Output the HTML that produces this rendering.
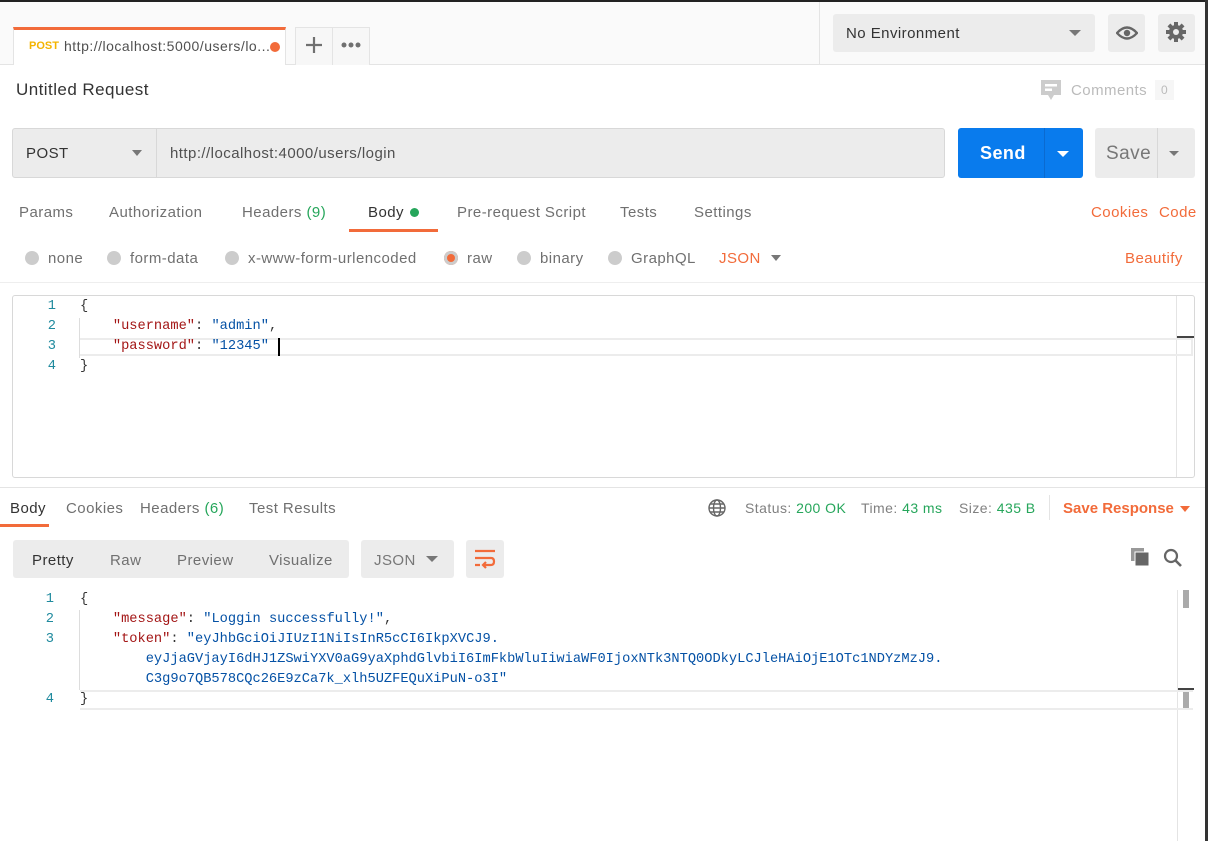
<!DOCTYPE html>
<html><head><meta charset="utf-8"><style>
*{margin:0;padding:0;box-sizing:border-box}
body{width:1208px;height:841px;overflow:hidden;background:#fff;font-family:"Liberation Sans",sans-serif;font-size:15px;letter-spacing:0.45px;color:#505050;position:relative}
.a{position:absolute;white-space:nowrap}
.t{margin-top:1px}
.mono{font-family:"Liberation Mono",monospace;font-size:13.7px;line-height:20px;letter-spacing:0}
.k{color:#a31515}.s{color:#0451a5}.g{color:#1f8a9e}
.rad{display:inline-block;width:14px;height:14px;border-radius:50%;background:#ccc;vertical-align:-2px;margin-right:9px}
.gr{color:#26a65b}
.or{color:#f26b3a}
</style></head><body>
<div class="a" style="left:0;top:0;width:1208px;height:65px;background:#fafafa;border-bottom:1px solid #e4e4e4"></div>
<div class="a" style="left:0;top:0;width:1208px;height:2px;background:#222"></div>
<div class="a" style="left:1205px;top:0;width:3px;height:841px;background:#333"></div>
<div class="a" style="left:13px;top:27px;width:273px;height:38px;background:#fff;border-top:3px solid #f26b3a;border-left:1px solid #e4e4e4;border-right:1px solid #e4e4e4"></div>
<div class="a" style="left:29px;top:40px;font-size:11px;font-weight:bold;color:#f4b400;letter-spacing:0">POST</div>
<div class="a" style="left:64px;top:38px;font-size:14px;color:#505050;letter-spacing:0.5px">http://localhost:5000/users/lo...</div>
<div class="a" style="left:270px;top:42px;width:10px;height:10px;border-radius:50%;background:#f26b3a"></div>
<div class="a" style="left:295px;top:27px;width:75px;height:38px;border:1px solid #e4e4e4;border-bottom:none;background:#f7f7f7"></div>
<div class="a" style="left:332px;top:27px;width:1px;height:38px;background:#e4e4e4"></div>
<svg class="a" style="left:305px;top:36px" width="18" height="18" viewBox="0 0 18 18"><path d="M9 1V17M1 9H17" stroke="#707070" stroke-width="2.2"/></svg>
<svg class="a" style="left:341px;top:42px" width="20" height="6" viewBox="0 0 20 6"><g fill="#707070"><circle cx="3" cy="3" r="2.5"/><circle cx="10" cy="3" r="2.5"/><circle cx="17" cy="3" r="2.5"/></g></svg>
<div class="a" style="left:819px;top:2px;width:1px;height:62px;background:#e4e4e4"></div>
<div class="a" style="left:833px;top:14px;width:262px;height:38px;background:#ececec;border-radius:3px"></div>
<div class="a" style="left:846px;top:25px;font-size:15px;color:#333">No Environment</div>
<div class="a" style="left:1069px;top:30px;border-left:6px solid transparent;border-right:6px solid transparent;border-top:6px solid #777"></div>
<div class="a" style="left:1108px;top:14px;width:37px;height:38px;background:#ececec;border-radius:3px"></div>
<svg class="a" style="left:1116px;top:25px" width="22" height="16" viewBox="0 0 22 16"><path d="M1 8Q11-3 21 8Q11 19 1 8Z" fill="none" stroke="#666" stroke-width="2.4"/><circle cx="11" cy="8" r="3.2" fill="#666"/></svg>
<div class="a" style="left:1158px;top:14px;width:37px;height:38px;background:#ececec;border-radius:3px"></div>
<svg class="a" style="left:1165px;top:21px" width="22" height="22" viewBox="0 0 22 22"><g fill="#666"><circle cx="11" cy="11" r="7"/><rect x="9" y="1" width="4" height="20"/><rect x="1" y="9" width="20" height="4"/><rect x="9" y="1" width="4" height="20" transform="rotate(45 11 11)"/><rect x="9" y="1" width="4" height="20" transform="rotate(-45 11 11)"/></g><circle cx="11" cy="11" r="3" fill="#ececec"/></svg>
<div class="a" style="left:16px;top:80px;font-size:17px;color:#333">Untitled Request</div>
<svg class="a" style="left:1041px;top:80px" width="20" height="20" viewBox="0 0 20 20"><path d="M0 0H20V15H13L10 20L7 15H0Z" fill="#ccc"/><rect x="4" y="4" width="12" height="2.5" fill="#fff"/><rect x="4" y="8.5" width="7" height="2.5" fill="#fff"/></svg>
<div class="a" style="left:1071px;top:82px;font-size:15px;color:#bbb">Comments</div>
<div class="a" style="left:1155px;top:80px;width:19px;height:20px;background:#f6f6f6;color:#bbb;font-size:12px;text-align:center;line-height:20px">0</div>
<div class="a" style="left:12px;top:128px;width:933px;height:50px;background:#ececec;border:1px solid #d8d8d8;border-radius:3px"></div>
<div class="a" style="left:156px;top:129px;width:1px;height:48px;background:#d8d8d8"></div>
<div class="a" style="left:26px;top:145px;font-size:15px;color:#333">POST</div>
<div class="a" style="left:132px;top:150px;border-left:5px solid transparent;border-right:5px solid transparent;border-top:6px solid #777"></div>
<div class="a" style="left:170px;top:145px;font-size:15px;color:#505050">http://localhost:4000/users/login</div>
<div class="a" style="left:958px;top:128px;width:125px;height:50px;background:#097bed;border-radius:3px"></div>
<div class="a" style="left:1044px;top:128px;width:1px;height:50px;background:#0a6ad0"></div>
<div class="a" style="left:980px;top:143px;font-size:18px;font-weight:bold;color:#fff">Send</div>
<div class="a" style="left:1057px;top:151px;border-left:6px solid transparent;border-right:6px solid transparent;border-top:6px solid #fff"></div>
<div class="a" style="left:1095px;top:128px;width:100px;height:50px;background:#ececec;border-radius:3px"></div>
<div class="a" style="left:1157px;top:128px;width:1px;height:50px;background:#d8d8d8"></div>
<div class="a" style="left:1106px;top:143px;font-size:19px;color:#777">Save</div>
<div class="a" style="left:1169px;top:151px;border-left:5px solid transparent;border-right:5px solid transparent;border-top:5px solid #777"></div>
<div class="a" style="left:19px;top:204px;color:#707070">Params</div>
<div class="a" style="left:109px;top:204px;color:#707070">Authorization</div>
<div class="a" style="left:242px;top:204px;color:#707070">Headers <span class="gr">(9)</span></div>
<div class="a" style="left:368px;top:204px;color:#333">Body</div>
<div class="a" style="left:410px;top:208px;width:9px;height:9px;border-radius:50%;background:#26a65b"></div>
<div class="a" style="left:349px;top:229px;width:89px;height:3px;background:#f26b3a"></div>
<div class="a" style="left:457px;top:204px;color:#707070">Pre-request Script</div>
<div class="a" style="left:620px;top:204px;color:#707070">Tests</div>
<div class="a" style="left:694px;top:204px;color:#707070">Settings</div>
<div class="a or" style="left:1091px;top:204px">Cookies</div>
<div class="a or" style="left:1159px;top:204px">Code</div>
<div class="a" style="left:25px;top:250px;color:#707070"><span class="rad"></span>none</div>
<div class="a" style="left:107px;top:250px;color:#707070"><span class="rad"></span>form-data</div>
<div class="a" style="left:225px;top:250px;color:#707070"><span class="rad"></span>x-www-form-urlencoded</div>
<div class="a" style="left:444px;top:250px;color:#707070"><span class="rad" style="background:#f26b3a;box-shadow:inset 0 0 0 3px #ccc"></span>raw</div>
<div class="a" style="left:517px;top:250px;color:#707070"><span class="rad"></span>binary</div>
<div class="a" style="left:608px;top:250px;color:#707070"><span class="rad"></span>GraphQL</div>
<div class="a or" style="left:719px;top:250px">JSON</div>
<div class="a" style="left:771px;top:255px;border-left:5px solid transparent;border-right:5px solid transparent;border-top:6px solid #777"></div>
<div class="a or" style="left:1125px;top:250px">Beautify</div>
<div class="a" style="left:0;top:282px;width:1205px;height:1px;background:#eee"></div>
<div class="a" style="left:12px;top:295px;width:1183px;height:183px;border:1px solid #d8d8d8;border-radius:3px"></div>
<div class="a" style="left:1176px;top:296px;width:1px;height:181px;background:#e4e4e4"></div>
<div class="a" style="left:1177px;top:336px;width:17px;height:2px;background:#444"></div>
<div class="a" style="left:80px;top:338px;width:1113px;height:18px;border:2px solid #ececec;border-left:none"></div>
<div class="a" style="left:79px;top:318px;width:1px;height:40px;background:#ddd"></div>
<div class="a mono g" style="left:40px;top:297px;text-align:right;width:16px">1<br>2<br>3<br>4</div>
<div class="a mono" style="left:80px;top:297px;color:#333">{<br>&nbsp;&nbsp;&nbsp;&nbsp;<span class="k">"username"</span>: <span class="s">"admin"</span>,<br>&nbsp;&nbsp;&nbsp;&nbsp;<span class="k">"password"</span>: <span class="s">"12345"</span><br>}</div>
<div class="a" style="left:278px;top:338px;width:2px;height:18px;background:#000"></div>
<div class="a" style="left:0;top:487px;width:1205px;height:1px;background:#e4e4e4"></div>
<div class="a" style="left:10px;top:500px;color:#333">Body</div>
<div class="a" style="left:0;top:524px;width:49px;height:3px;background:#f26b3a"></div>
<div class="a" style="left:66px;top:500px;color:#707070">Cookies</div>
<div class="a" style="left:140px;top:500px;color:#707070">Headers <span class="gr">(6)</span></div>
<div class="a" style="left:249px;top:500px;color:#707070">Test Results</div>
<svg class="a" style="left:707px;top:498px" width="20" height="20" viewBox="0 0 20 20"><g fill="none" stroke="#666" stroke-width="1.4"><circle cx="10" cy="10" r="8"/><ellipse cx="10" cy="10" rx="3.5" ry="8"/><path d="M2 10H18M3.5 6H16.5M3.5 14H16.5"/></g></svg>
<div class="a" style="left:745px;top:500px;font-size:14px;color:#808080">Status: <span class="gr">200 OK</span></div>
<div class="a" style="left:861px;top:500px;font-size:14px;color:#808080">Time: <span class="gr">43 ms</span></div>
<div class="a" style="left:959px;top:500px;font-size:14px;color:#808080">Size: <span class="gr">435 B</span></div>
<div class="a" style="left:1049px;top:495px;width:1px;height:25px;background:#e4e4e4"></div>
<div class="a or" style="left:1063px;top:500px;font-weight:bold;letter-spacing:0">Save Response</div>
<div class="a" style="left:1180px;top:506px;border-left:5px solid transparent;border-right:5px solid transparent;border-top:6px solid #f26b3a"></div>
<div class="a" style="left:13px;top:540px;width:336px;height:38px;background:#ececec;border-radius:3px"></div>
<div class="a" style="left:32px;top:552px;color:#333">Pretty</div>
<div class="a" style="left:110px;top:552px;color:#707070">Raw</div>
<div class="a" style="left:177px;top:552px;color:#707070">Preview</div>
<div class="a" style="left:269px;top:552px;color:#707070">Visualize</div>
<div class="a" style="left:361px;top:540px;width:93px;height:38px;background:#ececec;border-radius:3px"></div>
<div class="a" style="left:374px;top:552px;color:#777">JSON</div>
<div class="a" style="left:426px;top:556px;border-left:6px solid transparent;border-right:6px solid transparent;border-top:6px solid #777"></div>
<div class="a" style="left:466px;top:540px;width:38px;height:38px;background:#ececec;border-radius:3px"></div>
<svg class="a" style="left:474px;top:549px" width="22" height="20" viewBox="0 0 22 20"><g fill="none" stroke="#f26b3a" stroke-width="2.2"><path d="M1 2H21M1 9H17Q20 9 20 12.5Q20 16 17 16H10M1 16H6"/><path d="M12 13L9 16L12 19"/></g></svg>
<svg class="a" style="left:1131px;top:548px" width="19" height="19" viewBox="0 0 19 19"><rect x="0" y="0" width="13" height="13" fill="#999"/><rect x="4" y="4" width="14" height="14" fill="#666" stroke="#fff" stroke-width="1"/></svg>
<svg class="a" style="left:1163px;top:548px" width="20" height="20" viewBox="0 0 20 20"><circle cx="8" cy="8" r="6" fill="none" stroke="#666" stroke-width="2.2"/><path d="M12.5 12.5L18 18" stroke="#666" stroke-width="2.6"/></svg>
<div class="a" style="left:1177px;top:590px;width:1px;height:251px;background:#e4e4e4"></div>
<div class="a" style="left:1183px;top:590px;width:6px;height:18px;background:#aaa"></div>
<div class="a" style="left:1178px;top:688px;width:16px;height:2px;background:#444"></div>
<div class="a" style="left:1183px;top:690px;width:6px;height:18px;background:#aaa"></div>
<div class="a" style="left:80px;top:690px;width:1113px;height:20px;border-top:2px solid #ececec;border-bottom:2px solid #ececec"></div>
<div class="a" style="left:79px;top:610px;width:1px;height:80px;background:#ddd"></div>
<div class="a mono g" style="left:38px;top:590px;text-align:right;width:16px">1<br>2<br>3<br><br><br>4</div>
<div class="a mono" style="left:80px;top:590px;color:#333">{<br>&nbsp;&nbsp;&nbsp;&nbsp;<span class="k">"message"</span>: <span class="s">"Loggin successfully!"</span>,<br>&nbsp;&nbsp;&nbsp;&nbsp;<span class="k">"token"</span>: <span class="s">"eyJhbGciOiJIUzI1NiIsInR5cCI6IkpXVCJ9.<br>&nbsp;&nbsp;&nbsp;&nbsp;&nbsp;&nbsp;&nbsp;&nbsp;eyJjaGVjayI6dHJ1ZSwiYXV0aG9yaXphdGlvbiI6ImFkbWluIiwiaWF0IjoxNTk3NTQ0ODkyLCJleHAiOjE1OTc1NDYzMzJ9.<br>&nbsp;&nbsp;&nbsp;&nbsp;&nbsp;&nbsp;&nbsp;&nbsp;C3g9o7QB578CQc26E9zCa7k_xlh5UZFEQuXiPuN-o3I"</span><br>}</div>
</body></html>
